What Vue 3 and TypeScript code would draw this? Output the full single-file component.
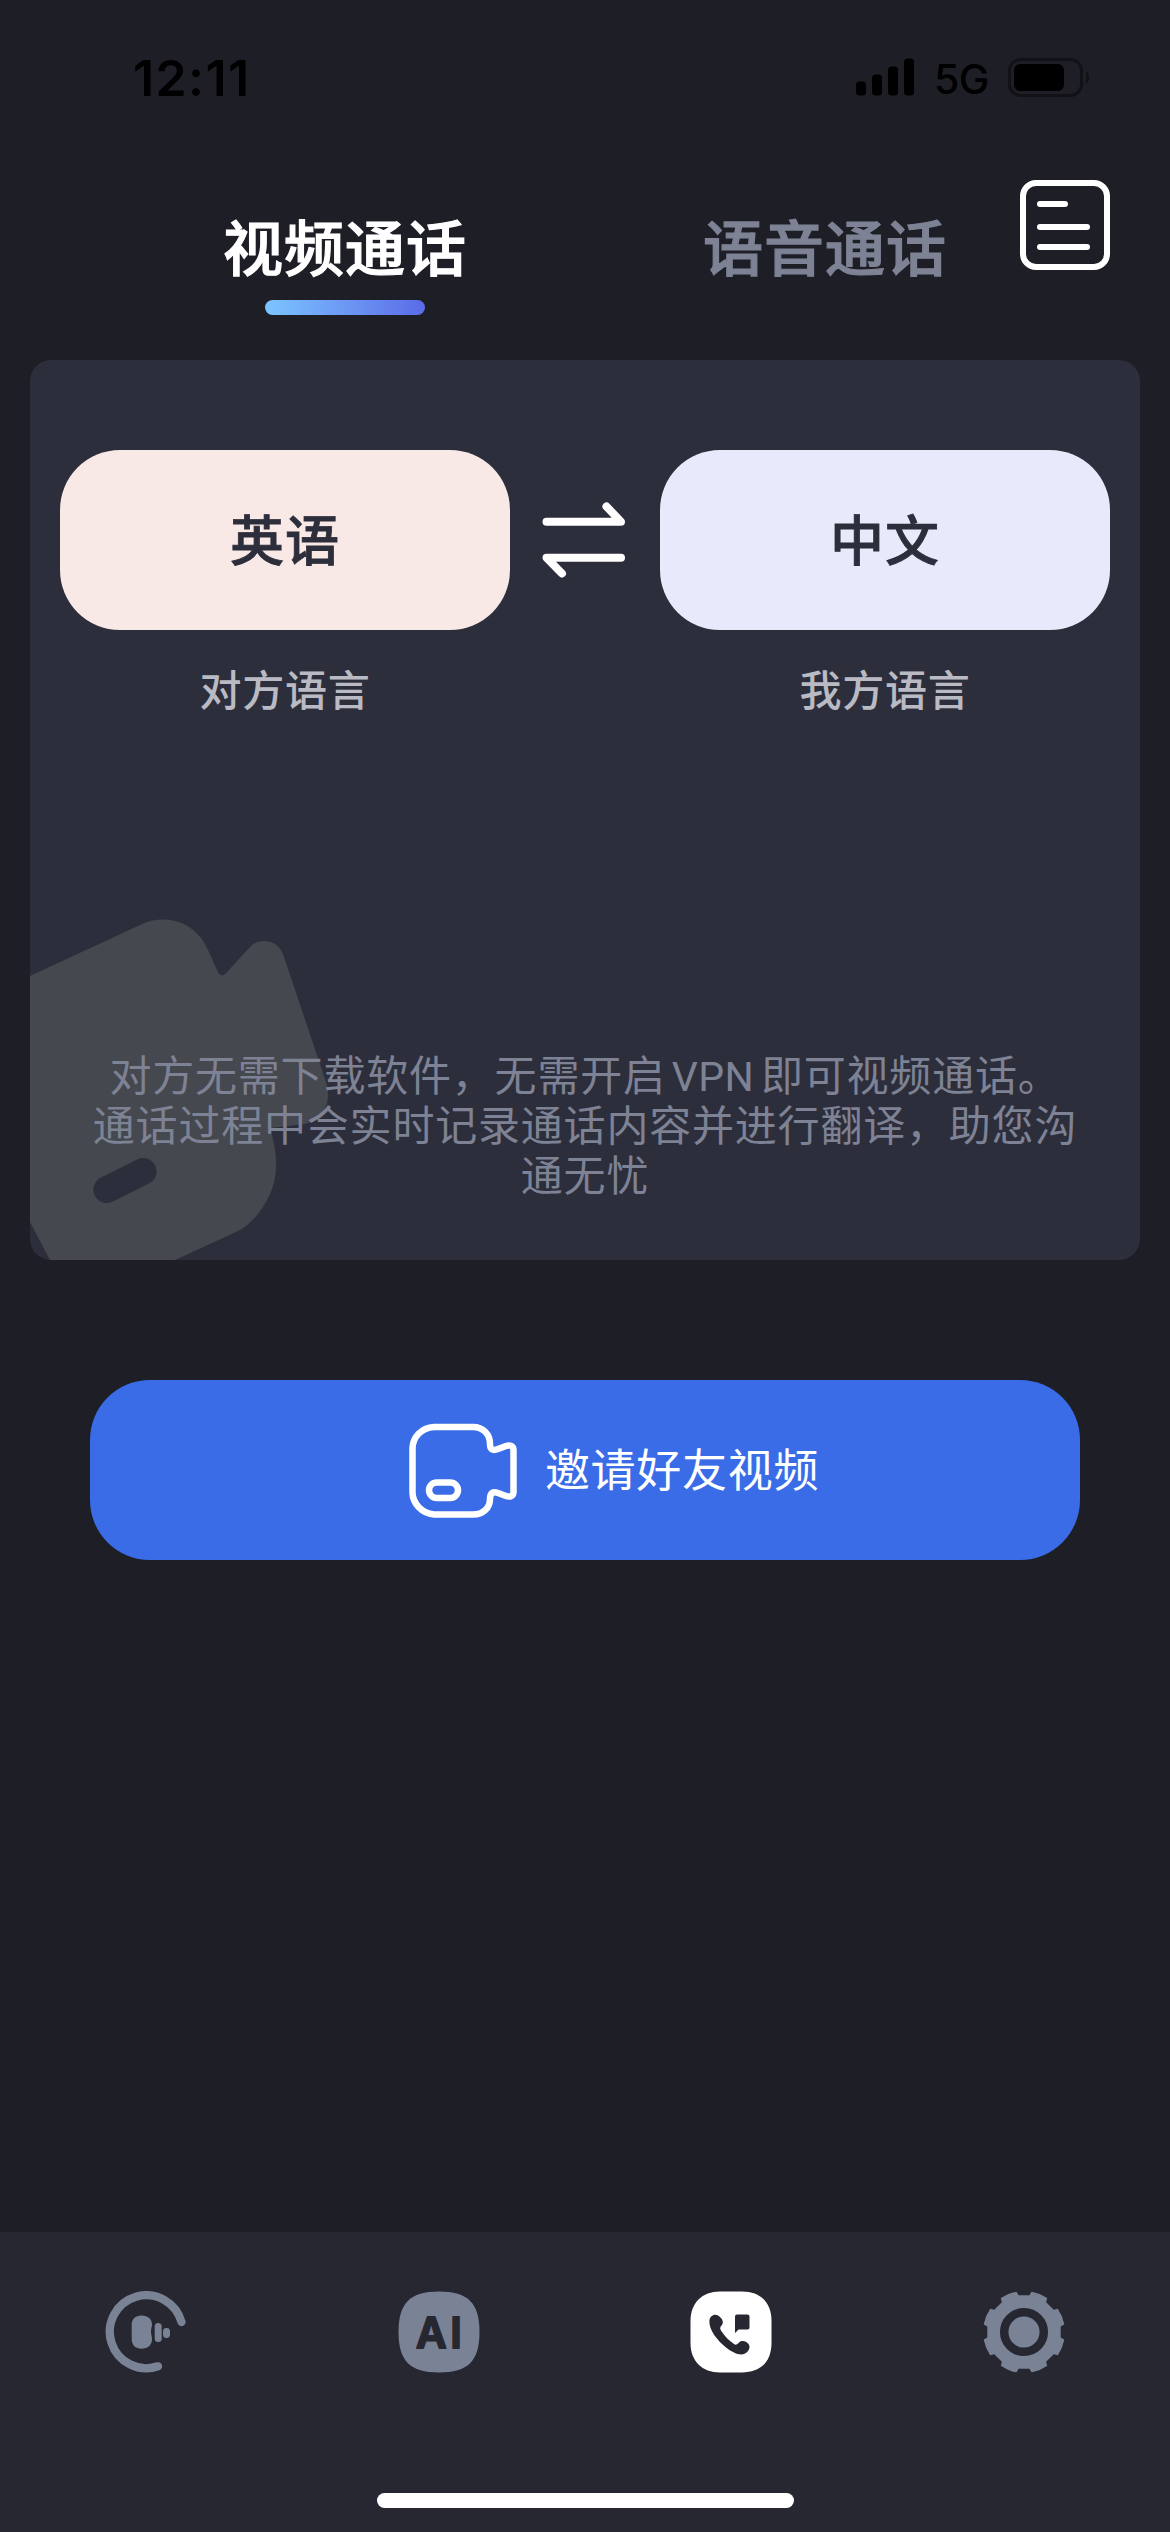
<script setup lang="ts">
import { ref } from 'vue'

type CallMode = 'video' | 'voice'

interface ModeTab {
  key: CallMode
  label: string
}

interface Language {
  name: string
  caption: string
  tone: 'peer' | 'mine'
}

const modes: ModeTab[] = [
  { key: 'video', label: '视频通话' },
  { key: 'voice', label: '语音通话' },
]
const active = ref<CallMode>('video')

const peer: Language = { name: '英语', caption: '对方语言', tone: 'peer' }
const mine: Language = { name: '中文', caption: '我方语言', tone: 'mine' }
const notchAngles: number[] = [0, 45, 90, 135, 180, 225, 270, 315]
</script>

<template>
  <div class="screen">
    <header class="status">
      <span class="time">12:11</span>
      <div class="indicators">
        <svg class="signal" width="60" height="40" viewBox="0 0 60 40">
          <rect x="0" y="23.5" width="10" height="14" rx="3.5" />
          <rect x="16" y="16.5" width="10" height="21" rx="3.5" />
          <rect x="32" y="8.5" width="10" height="29" rx="3.5" />
          <rect x="48" y="0.5" width="10" height="37" rx="3.5" />
        </svg>
        <span class="network">5G</span>
        <svg class="battery" width="84" height="40" viewBox="0 0 84 40">
          <rect x="1.5" y="1.5" width="72" height="36" rx="11" fill="none" stroke="#111116" stroke-width="3" />
          <rect x="6" y="6" width="50" height="27" rx="6" fill="#000" />
          <path d="M78 13.5c4 1.500 4 10.500 0 12z" fill="#111116" />
        </svg>
      </div>
    </header>

    <nav class="modes">
      <button
        v-for="mode in modes"
        :key="mode.key"
        class="mode"
        :class="{ active: active === mode.key }"
        @click="active = mode.key"
      >
        <span class="mode-label">{{ mode.label }}</span>
        <span class="mode-line"></span>
      </button>
      <svg class="records" width="90" height="90" viewBox="0 0 90 90">
        <rect x="3" y="3" width="84" height="84" rx="13" />
        <path d="M20 24h25M20 47h47M20 67h47" />
      </svg>
    </nav>

    <section class="card">
      <svg class="watermark" width="310" height="350" viewBox="30 910 310 350">
        <path
          fill-rule="evenodd"
          d="M30 976L140 925C169 911 198 925 208 950L217 970C219 976 223 977 226 973L251 946C260 937 278 940 283 954L326 1082C332 1103 324 1119 305 1124L270 1128C279 1158 277 1178 270 1194C262 1211 252 1224 236 1232L175 1260H50L30 1222ZM100.100 1177.900A13.500 13.500 0 0 0 111.900 1202.100L149.900 1183.100A13.500 13.500 0 0 0 138.100 1158.900Z"
        />
      </svg>

      <div class="languages">
        <div class="language">
          <button class="pill" :class="peer.tone">{{ peer.name }}</button>
          <span class="caption">{{ peer.caption }}</span>
        </div>
        <svg class="swap" width="150" height="180" viewBox="0 0 150 180">
          <path d="M36.500 71.700H111L96.500 56.500M111 107.800H36.500L52 123.500" />
        </svg>
        <div class="language">
          <button class="pill" :class="mine.tone">{{ mine.name }}</button>
          <span class="caption">{{ mine.caption }}</span>
        </div>
      </div>

      <p class="description">
        对方无需下载软件，无需开启<span class="latin">VPN</span>即可视频通话。<br />通话过程中会实时记录通话内容并进行翻译，助您沟<br />通无忧
      </p>
    </section>

    <button class="invite">
      <svg width="110" height="96" viewBox="0 0 110 96">
        <path
          d="M26 5H65C75 5 82 12 82 22C82 28 85 29 90 27L98 24C102 22.500 105.500 24 105.500 28V70C105.500 74 102 75.500 98 74L90 71C85 69 82 71 82 77C82 86 75 92.500 65 92.500H26C13 91 5 81 4.500 71V26C5 15 13 6 26 5Z"
        />
        <rect x="21" y="60.500" width="29" height="15.500" rx="7.750" />
      </svg>
      <span class="invite-label">邀请好友视频</span>
    </button>

    <footer class="tabbar">
      <div class="tabs">
        <div class="tab">
          <svg width="82" height="82" viewBox="-1 0 82 82">
            <path class="arc" d="M75.500 31A36.500 36.500 0 1 0 52 75.300" />
            <path
              d="M35.500 24.500C42 24.500 46 28 46 33.500C46 36 45 37 45 40.500C45 44 46 45 46 48C46 54 42 57.800 35.500 57.800C29.500 57.800 25.700 54 25.700 48V34C25.700 28 29.500 24.500 35.500 24.500Z"
            />
            <rect x="48.700" y="32" width="7" height="19" rx="3.500" />
            <rect x="57" y="37" width="7" height="10" rx="3.400" />
          </svg>
        </div>
        <div class="tab">
          <svg width="82" height="82" viewBox="0 0 82 82">
            <path d="M41 .500C70 .500 81.500 12 81.500 41S70 81.500 41 81.500S.500 70 .500 41S12 .500 41 .500Z" />
            <text class="ai" x="18" y="57" textLength="46">AI</text>
          </svg>
        </div>
        <div class="tab selected">
          <svg width="82" height="82" viewBox="0 0 82 82">
            <path d="M30 .500H52C71 .500 81.500 12 81.500 30V52C81.500 71 70 81.500 52 81.500H30C12 81.500 .500 70 .500 52V30C.500 12 12 .500 30 .500Z" />
            <path
              class="glyph"
              d="M19.400 29.500C20 25 24 22.500 28 24.500C32 27 34.500 31 31.500 34.500C29.500 37 30 38 32 41C35 45.500 39 49.500 44 53C46 54.300 47 53.500 49 51.500C52 48.800 56 50 58.500 53C61 56.500 58.500 61 54.500 62.800C50 64.800 43 62 36 56.500C28 50 18.500 39 19.400 29.500Z"
            />
            <path class="glyph" d="M47 23.500H57.500Q59.500 23.500 59.500 25.500V36.500Q59.500 38.500 57.500 38.500H48.500L45 42V25.500Q45 23.500 47 23.500Z" />
          </svg>
        </div>
        <div class="tab">
          <svg width="82" height="82" viewBox="0 0 82 82">
            <circle cx="41" cy="41" r="41" />
            <path
              v-for="angle in notchAngles"
              :key="angle"
              class="cut"
              d="M32.500 -1L35.600 4.300H46.400L49.500 -1Z"
              :transform="`rotate(${angle} 41 41)`"
            />
            <circle class="ring" cx="41" cy="41" r="19.800" />
          </svg>
        </div>
      </div>
      <div class="home"></div>
    </footer>
  </div>
</template>

<style>
body {
  background: #1e1e27;
}
</style>

<style scoped>
.screen {
  display: flex;
  flex-direction: column;
  width: 1170px;
  height: 2532px;
  overflow: hidden;
  background: #1e1e27;
  font-family: 'Noto Sans CJK SC', 'Noto Sans', sans-serif;
}

button {
  display: block;
  margin: 0;
  padding: 0;
  border: 0;
  background: none;
  font-family: inherit;
}

svg {
  display: block;
  flex: none;
}

.status {
  display: flex;
  justify-content: space-between;
  height: 180px;
  box-sizing: border-box;
  padding: 58px 78px 0 133px;
  color: #000;
  font-family: Inter, 'Liberation Sans', sans-serif;
}

.time {
  height: 40px;
  line-height: 40px;
  font-size: 50px;
  font-weight: 600;
  letter-spacing: 1.4px;
}

.indicators {
  display: flex;
  height: 40px;
}

.network {
  width: 54px;
  margin: 0 20px 0 18px;
  line-height: 42px;
  font-size: 41px;
  font-weight: 500;
  letter-spacing: -0.5px;
}

.modes {
  display: flex;
  height: 180px;
  padding-left: 105px;
}

.mode {
  display: flex;
  flex: none;
  flex-direction: column;
  align-items: center;
  width: 480px;
  color: #7d8294;
}

.mode.active {
  color: #fff;
}

.mode-label {
  margin-top: 25px;
  line-height: 80px;
  font-size: 60px;
  font-weight: 500;
  letter-spacing: 1px;
  -webkit-text-stroke: 1.2px currentColor;
}

.mode-line {
  width: 160px;
  height: 15px;
  margin-top: 15px;
  border-radius: 8px;
}

.active .mode-line {
  background: linear-gradient(90deg, #7cc5ff, #5b6be8);
}

.records {
  margin-left: -45px;
  fill: none;
  stroke: #fff;
  stroke-width: 6;
  stroke-linecap: round;
}

.card {
  position: relative;
  display: flex;
  flex-direction: column;
  justify-content: space-between;
  height: 900px;
  margin: 0 30px;
  box-sizing: border-box;
  padding: 90px 30px 62px;
  overflow: hidden;
  border-radius: 21px;
  background: #2d2e3b;
}

.watermark {
  position: absolute;
  left: 0;
  bottom: 0;
  fill: #46484f;
}

.languages {
  display: flex;
}

.language {
  display: flex;
  flex-direction: column;
  align-items: center;
  width: 450px;
}

.pill {
  width: 450px;
  height: 180px;
  padding-bottom: 6px;
  border-radius: 60px;
  color: #2d2e3b;
  font-size: 54px;
  font-weight: 500;
  letter-spacing: 1px;
  -webkit-text-stroke: 0.8px currentColor;
}

.peer {
  background: #f8e8e6;
}

.mine {
  background: #e8eafc;
}

.caption {
  margin-top: 28px;
  line-height: 60px;
  font-size: 42px;
  font-weight: 500;
  letter-spacing: 0.7px;
  color: #b9bac3;
}

.swap {
  fill: none;
  stroke: #fff;
  stroke-width: 8;
  stroke-linecap: round;
  stroke-linejoin: round;
}

.description {
  position: relative;
  margin: 0 -10px;
  text-align: center;
  white-space: nowrap;
  line-height: 50px;
  font-size: 42px;
  font-weight: 400;
  letter-spacing: 0.8px;
  color: #7d8294;
}

.latin {
  margin: 0 7px 0 6px;
  line-height: 0;
  font-family: Roboto, sans-serif;
  font-size: 41px;
  letter-spacing: 0.3px;
}

.invite {
  display: flex;
  align-items: center;
  justify-content: center;
  gap: 27px;
  width: 990px;
  height: 180px;
  margin: 120px 90px 0;
  padding-left: 57px;
  border-radius: 60px;
  background: #3b6ce7;
  color: #fff;
  font-size: 45px;
  letter-spacing: 0.7px;
}

.invite svg {
  fill: none;
  stroke: #fff;
  stroke-width: 6.5;
  stroke-linejoin: round;
}

.invite-label {
  padding-bottom: 5px;
}

.tabbar {
  display: flex;
  flex-direction: column;
  justify-content: space-between;
  align-items: center;
  height: 300px;
  margin-top: auto;
  box-sizing: border-box;
  padding: 59px 0 24px;
  background: #272731;
}

.tabs {
  display: flex;
  width: 1170px;
}

.tab {
  display: flex;
  flex: 1;
  justify-content: center;
  fill: #7a8295;
}

.selected {
  fill: #fff;
}

.arc {
  fill: none;
  stroke: #7a8295;
  stroke-width: 8.300;
  stroke-linecap: round;
}

.ai {
  fill: #272731;
  stroke: #272731;
  stroke-width: 2;
  stroke-linejoin: round;
  font-family: Inter, sans-serif;
  font-size: 42px;
  font-weight: 600;
}

.glyph,
.cut {
  fill: #272731;
}

.ring {
  fill: none;
  stroke: #272731;
  stroke-width: 8.500;
}

.home {
  width: 417px;
  height: 15px;
  border-radius: 8px;
  background: #fff;
}
</style>
